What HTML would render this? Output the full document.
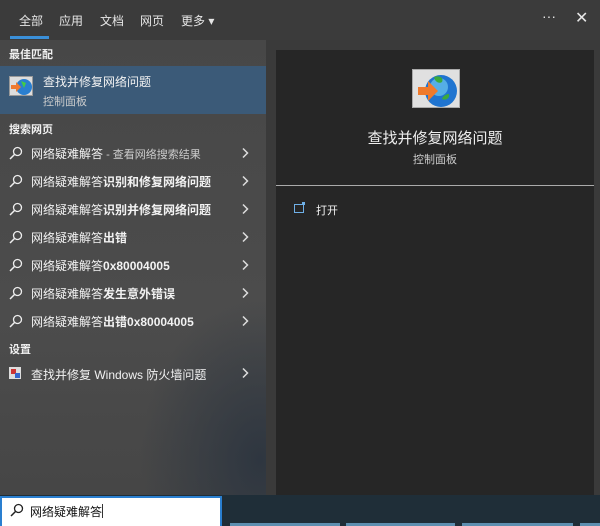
<!DOCTYPE html>
<html><head><meta charset="utf-8"><style>
*{margin:0;padding:0;box-sizing:border-box}
body{width:600px;height:526px;overflow:hidden;background:#1f2e38;font-family:"Liberation Sans","Noto Sans CJK SC",sans-serif;color:#fff;position:relative}
.top{position:absolute;left:0;top:0;width:600px;height:40px;background:#3b3b3b}
.tab{position:absolute;top:12px;font-size:12px;color:#e6e6e6}
.ul{position:absolute;left:10px;top:36px;width:39px;height:3px;background:#3a8fd8}
.left{position:absolute;left:0;top:40px;width:266px;height:455px;background:radial-gradient(ellipse 120px 160px at 260px 420px,#2e3640 0%,rgba(60,64,70,0) 100%),linear-gradient(180deg,#474747,#4c4c4c 60%,#464646)}
.mid{position:absolute;left:266px;top:40px;width:334px;height:455px;background:#3a3a3a}
.right{position:absolute;left:276px;top:50px;width:318px;height:445px;background:#262626}
.hdr{position:absolute;left:9px;font-size:11px;font-weight:bold;color:#f0f0f0}
.hl{position:absolute;left:0;top:66px;width:266px;height:48px;background:#3b5a78}
.row{position:absolute;left:31px;font-size:12px;color:#f2f2f2}
.row b{font-weight:bold}
.mag{position:absolute;left:9px;width:14px;height:14px}
.chev{position:absolute;left:241px;width:8px;height:12px}
.search{position:absolute;left:0;top:496px;width:222px;height:30px;background:#fff;border:2px solid #2a7fd0;border-bottom:none}
.strip{position:absolute;top:523px;height:3px;background:#5d8fb0}
</style></head><body>
<div class="top">
<div class="tab" style="left:19px">全部</div>
<div class="tab" style="left:59px">应用</div>
<div class="tab" style="left:100px">文档</div>
<div class="tab" style="left:140px">网页</div>
<div class="tab" style="left:181px">更多 ▾</div>
<div class="ul"></div>
<div class="tab" style="left:542px;top:8px;font-size:14px">···</div>
<div class="tab" style="left:575px;top:8px;font-size:16px">✕</div>
</div>
<div class="mid"></div>
<div class="right"></div>
<div class="left"></div>
<div class="hdr" style="top:46px">最佳匹配</div>
<div class="hl"></div>
<svg style="position:absolute;left:9px;top:76px" width="24" height="20"><rect x="0.5" y="0.5" width="23" height="19" fill="#ddd" stroke="#999"/><circle cx="15" cy="11" r="8" fill="#2a7fd0"/><path d="M12 5l5 2-2 5z" fill="#4c4"/><path d="M2 9h5v-3l5 5-5 5v-3H2z" fill="#f07a30"/></svg>
<div class="row" style="left:43px;top:73px">查找并修复网络问题</div>
<div class="row" style="left:43px;top:93px;font-size:11px;color:#ccc">控制面板</div>
<div class="hdr" style="top:121px">搜索网页</div>
<div id="rows"></div>
<div class="hdr" style="top:341px">设置</div>
<svg style="position:absolute;left:9px;top:367px" width="12" height="12"><rect width="12" height="12" fill="#ddd"/><rect x="2" y="2" width="5" height="5" fill="#c33"/><rect x="6" y="6" width="5" height="5" fill="#36c"/></svg>
<div class="row" style="top:366px">查找并修复 Windows 防火墙问题</div>
<svg class="chev" style="top:367px" viewBox="0 0 8 12"><path d="M2 1.5l4.5 4.5-4.5 4.5" fill="none" stroke="#ddd" stroke-width="1.5"/></svg>

<svg style="position:absolute;left:412px;top:69px" width="48" height="39"><rect x="0.5" y="0.5" width="47" height="38" fill="#e0e0e0" stroke="#aaa"/><circle cx="29" cy="22" r="16" fill="#1f74d0"/><circle cx="27" cy="18" r="9" fill="#6cc8f0" opacity=".7"/><path d="M22 8c6-2 10 1 8 5-3 2-7 0-8-5z M30 30c4 2 8-1 7-5-3 0-6 2-7 5z" fill="#3caa3c"/><path d="M6 18h10v-6l10 10-10 10v-6H6z" fill="#ef7a2c"/></svg>
<div style="position:absolute;left:276px;width:318px;top:127px;text-align:center;font-size:15px;color:#eee">查找并修复网络问题</div>
<div style="position:absolute;left:276px;width:318px;top:151px;text-align:center;font-size:11px;color:#ccc">控制面板</div>
<div style="position:absolute;left:276px;top:185px;width:318px;height:1px;background:#aaa"></div>
<svg style="position:absolute;left:294px;top:202px" width="12" height="11"><rect x="0.5" y="2.5" width="9" height="8" fill="none" stroke="#6fb0e8"/><rect x="8" y="0" width="3" height="3" fill="#6fb0e8"/></svg>
<div class="row" style="left:316px;top:202px;font-size:11px">打开</div>

<div class="search"></div>
<svg style="position:absolute;left:10px;top:503px" width="14" height="14"><circle cx="8.5" cy="5.5" r="4" fill="none" stroke="#222" stroke-width="1.3"/><path d="M5.5 8.5L1 13" stroke="#222" stroke-width="1.5"/></svg>
<div style="position:absolute;left:30px;top:503px;font-size:12px;color:#111">网络疑难解答<span style="display:inline-block;width:1px;height:14px;background:#333;vertical-align:-2px"></span></div>
<div class="strip" style="left:230px;width:110px"></div>
<div class="strip" style="left:346px;width:109px"></div>
<div class="strip" style="left:462px;width:111px"></div>
<div class="strip" style="left:580px;width:20px"></div>
<script>
var t=[['网络疑难解答','<span style="font-size:11px;color:#ccc"> - 查看网络搜索结果</span>'],['网络疑难解答<b>识别和修复网络问题</b>',''],['网络疑难解答<b>识别并修复网络问题</b>',''],['网络疑难解答<b>出错</b>',''],['网络疑难解答<b>0x80004005</b>',''],['网络疑难解答<b>发生意外错误</b>',''],['网络疑难解答<b>出错0x80004005</b>','']];
var h='';t.forEach(function(r,i){var y=145+i*28;h+='<svg class="mag" style="top:'+(y+1)+'px" viewBox="0 0 14 14"><circle cx="8.5" cy="5.5" r="4" fill="none" stroke="#eee" stroke-width="1.3"/><path d="M5.5 8.5L1 13" stroke="#eee" stroke-width="1.5"/></svg><div class="row" style="top:'+y+'px">'+r[0]+r[1]+'</div><svg class="chev" style="top:'+(y+2)+'px" viewBox="0 0 8 12"><path d="M2 1.5l4.5 4.5-4.5 4.5" fill="none" stroke="#ddd" stroke-width="1.5"/></svg>';});
document.getElementById('rows').innerHTML=h;
</script>
</body></html>
